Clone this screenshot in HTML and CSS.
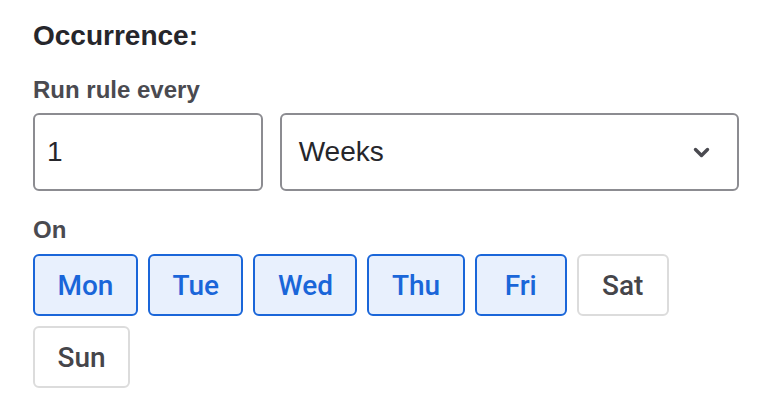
FILE: index.html
```html
<!DOCTYPE html>
<html lang="en">
<head>
<meta charset="utf-8">
<title>Occurrence</title>
<link rel="stylesheet" href="styles.css">
</head>
<body>
<form class="panel">
  <h2 class="title">Occurrence:</h2>
  <label class="label label-run">Run rule every</label>
  <div class="fields">
    <div class="input">1</div>
    <div class="select">
      <span>Weeks</span>
      <svg class="chev" width="17" height="11" viewBox="0 0 17 11" aria-hidden="true">
        <polyline points="2.5,2.5 8.5,8.5 14.5,2.5" fill="none" stroke="#4a4a50" stroke-width="3.4" stroke-linecap="round" stroke-linejoin="round"/>
      </svg>
    </div>
  </div>
  <label class="label label-on">On</label>
  <div class="days">
    <button type="button" class="day on">Mon</button>
    <button type="button" class="day on">Tue</button>
    <button type="button" class="day on">Wed</button>
    <button type="button" class="day on">Thu</button>
    <button type="button" class="day on">Fri</button>
    <button type="button" class="day">Sat</button>
    <button type="button" class="day">Sun</button>
  </div>
</form>
</body>
</html>
```
FILE: styles.css
```css
* { box-sizing: border-box; }
html, body { margin: 0; padding: 0; background: #fff; }
body { font-family: "Liberation Sans", Arial, sans-serif; }
.panel {
  width: 780px;
  padding: 19px 41px 0 33px;
  display: flex;
  flex-direction: column;
}
.title {
  margin: 0;
  font-size: 28px;
  line-height: 34px;
  font-weight: 700;
  color: #26262b;
}
.label {
  display: block;
  font-size: 24px;
  line-height: 29px;
  font-weight: 700;
  color: #4a4a50;
}
.label-run { margin-top: 22px; }
.label-on { margin-top: 24px; }
.fields {
  margin-top: 9px;
  display: grid;
  grid-template-columns: 1fr 2fr;
  column-gap: 17px;
}
.input, .select {
  height: 78px;
  border: 2px solid #8c8c91;
  border-radius: 6px;
  font-size: 28px;
  color: #26262b;
  display: flex;
  align-items: center;
}
.input { padding-left: 12px; }
.select {
  padding: 0 27px 0 17px;
  justify-content: space-between;
}
.chev { display: block; }
.days {
  margin-top: 10px;
  display: flex;
  flex-wrap: wrap;
  gap: 10px;
}
.day {
  height: 62px;
  min-width: 92px;
  padding: 0 22.5px;
  border: 2px solid #dcdcdc;
  border-radius: 6px;
  background: #fff;
  color: #45454a;
  font-family: Roboto, "Liberation Sans", Arial, sans-serif;
  font-weight: 500;
  font-size: 28px;
}
.day.on {
  border-color: #1a66d9;
  background: #e8f0fd;
  color: #1a66d9;
}
```
